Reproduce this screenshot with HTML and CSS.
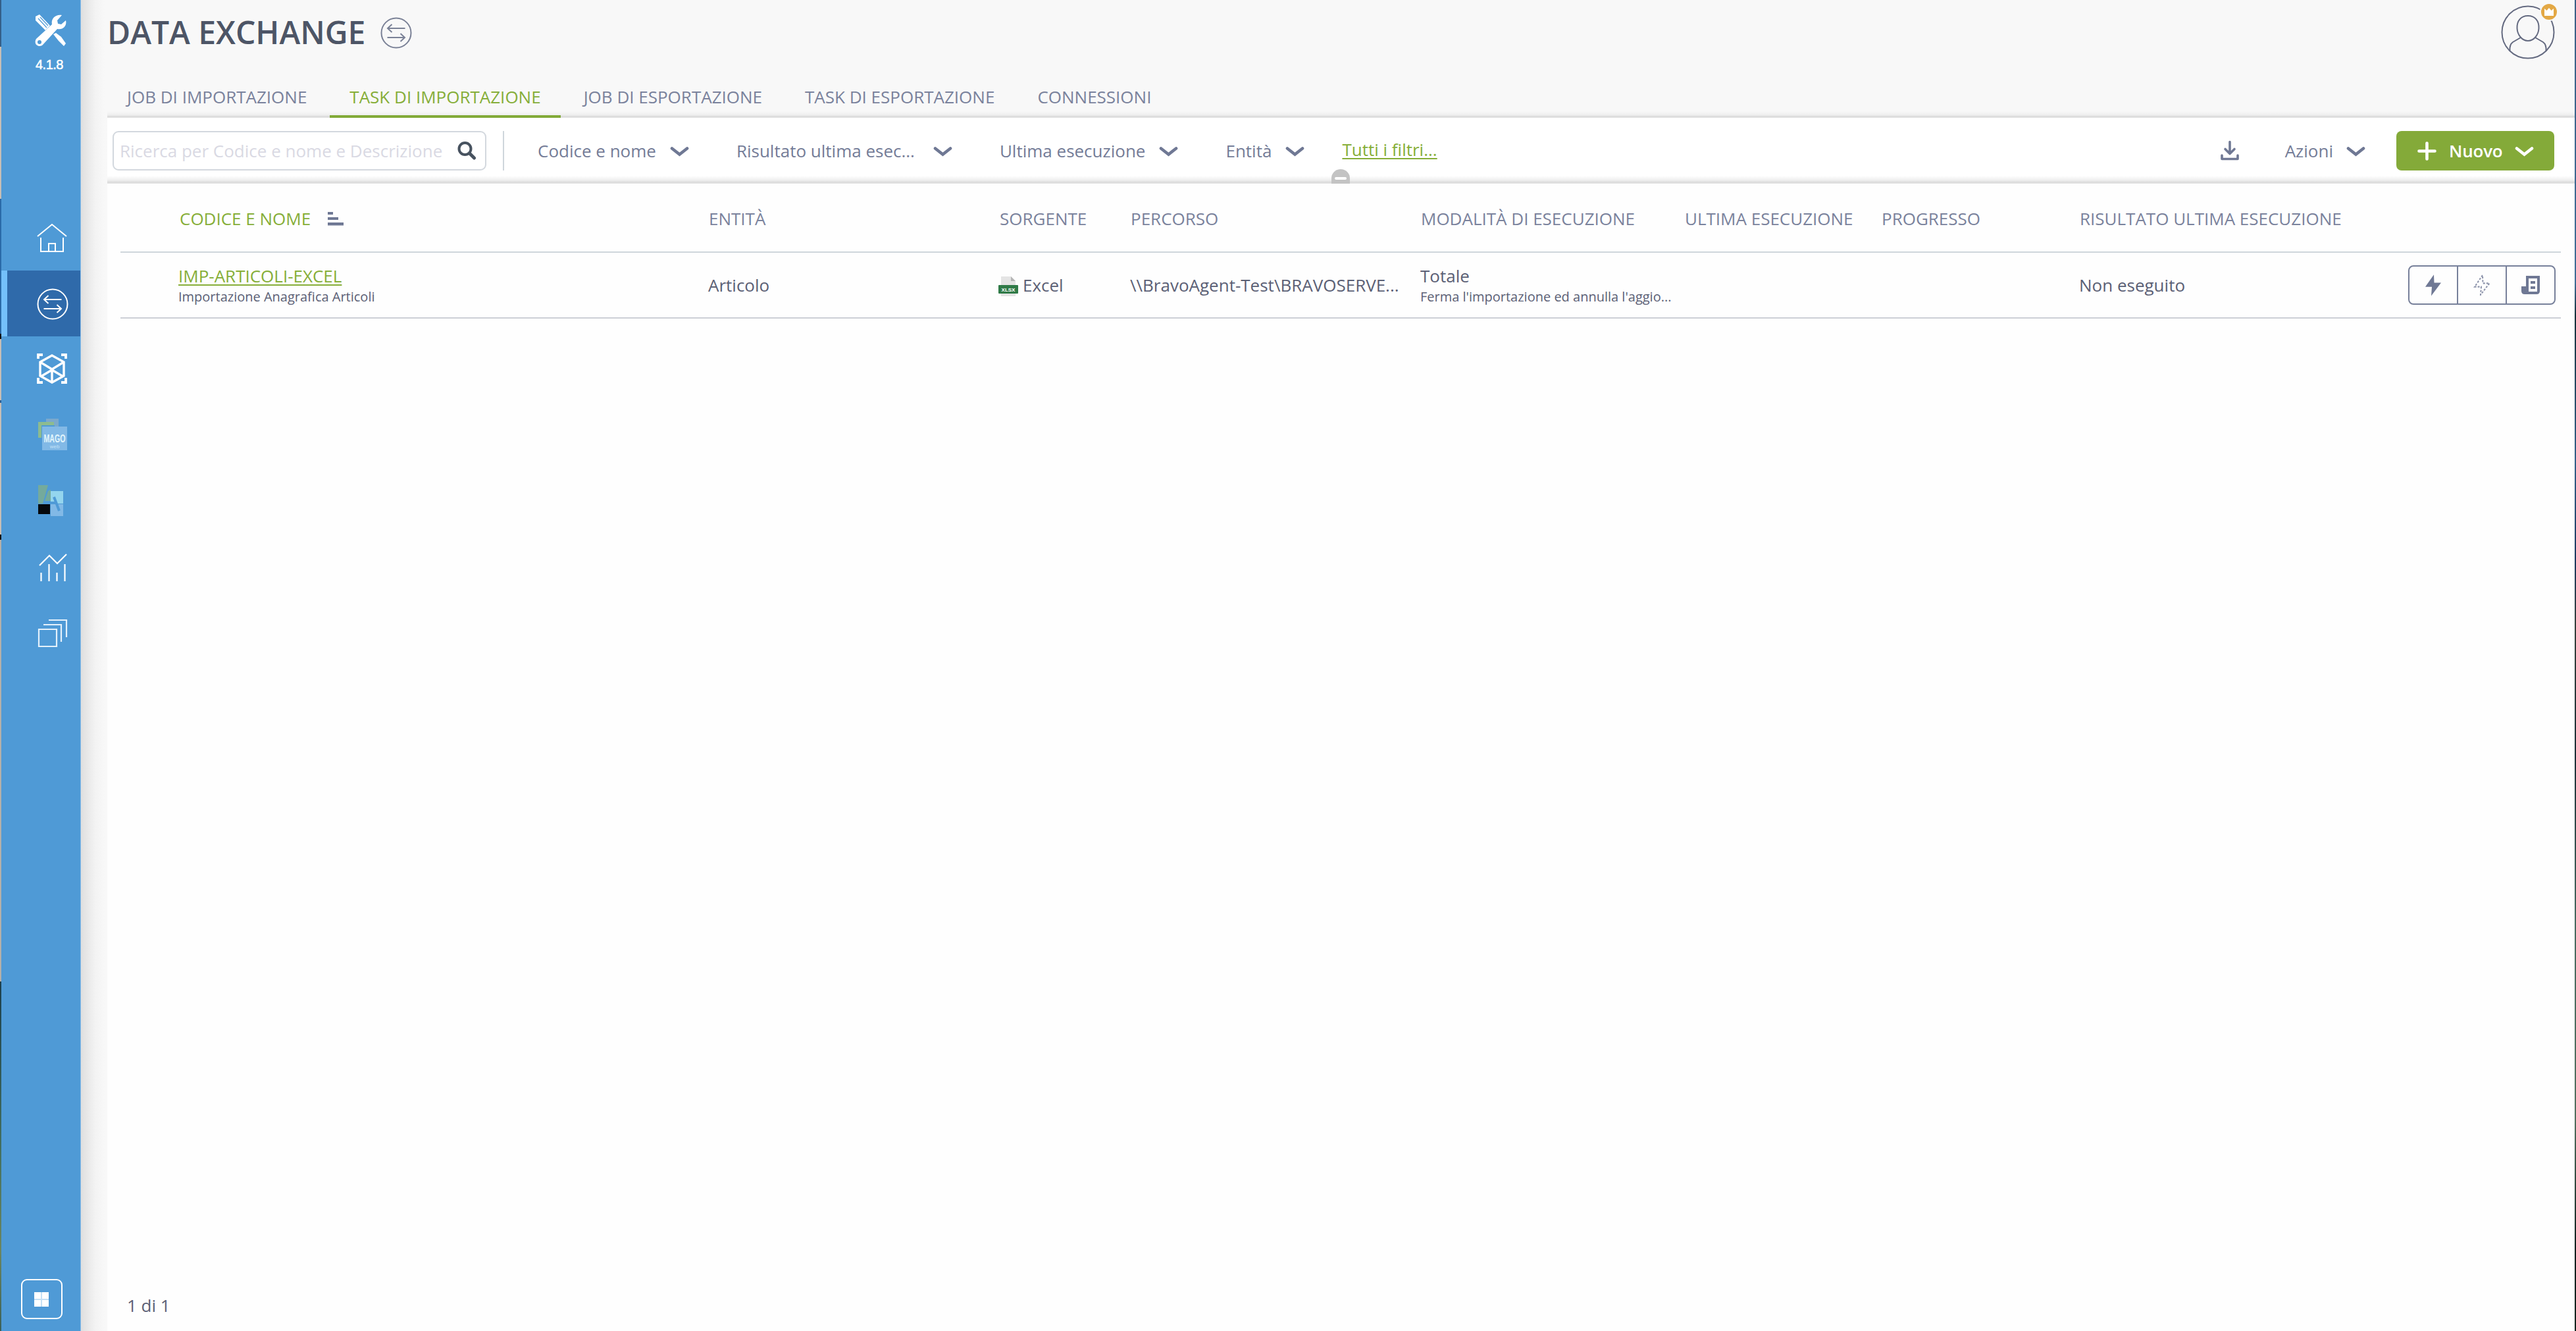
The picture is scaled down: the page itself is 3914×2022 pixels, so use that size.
FILE: index.html
```html
<!DOCTYPE html>
<html lang="it">
<head>
    <meta charset="UTF-8">
    <meta name="viewport" content="width=device-width, initial-scale=1.0">
    <title>Data Exchange</title>
    <link rel="stylesheet" href="styles.css">
</head>
<body>
    <!-- Shared icons -->
    <svg class="sprite">
        <symbol id="chevron" viewBox="0 0 29 16">
            <path d="M3 3.5L14.500 12.500L26 3.500" fill="none" stroke="currentColor" stroke-width="4.600" stroke-linecap="round" stroke-linejoin="miter"/>
        </symbol>
        <symbol id="exchange" viewBox="0 0 48 48">
            <g fill="none" stroke="currentColor">
                <circle cx="24" cy="24" r="22.500"/>
                <path d="M37.500 17H11.500M17.500 11L11 17L17.500 23M10.500 31H36.500M30.500 25L37 31L30.500 37"/>
            </g>
        </symbol>
    </svg>

    <div class="app">
        <div class="edge edge-left"></div>

        <nav class="sidebar">
            <div class="brand">
                <svg width="50" height="50" viewBox="0 0 50 50">
                    <!-- screwdriver -->
                    <path d="M2 4L8 1L24 18L17 25L2 10Z" fill="#fff"/>
                    <path d="M6 7L19 21M9 5L21 18" stroke="#4f9ad6" stroke-width="1.200"/>
                    <path d="M29 31L33 29L41 35L48 45L45 49L37 41Z" fill="#fff"/>
                    <!-- wrench -->
                    <path d="M42 2L35 10L36 15L41 16L48 10C50 18 44 25 35 23L13 47C8 52 -2 47 3 38L27 16C25 7 33 0 42 2Z" fill="#fff"/>
                    <circle cx="8" cy="43" r="3" fill="#4f9ad6"/>
                </svg>
                <span class="version">4.1.8</span>
            </div>
            <ul class="nav-list">
                <li class="nav-item">
                    <svg width="48" height="48" viewBox="0 0 48 48" fill="none" stroke="#fff" stroke-width="2">
                        <path d="M2 22L24 4L46 22M7 24V45H41V24M19 45V33H29V45"/>
                    </svg>
                </li>
                <li class="nav-item active">
                    <svg class="nav-exchange" width="48" height="48"><use href="#exchange"/></svg>
                </li>
                <li class="nav-item">
                    <svg width="48" height="48" viewBox="0 0 48 48" fill="none" stroke="#fff" stroke-width="3.400">
                        <path d="M24 3L42 13V34L24 44L6 34V13ZM6 13L24 24L42 13M24 24V44M24 25L7 35M24 25L41 35"/>
                        <path d="M3 8V2H10M38 2H45V8M3 37V44H10M38 44H45V37" stroke-width="3.800"/>
                    </svg>
                </li>
                <li class="nav-item">
                    <svg width="48" height="50" viewBox="0 0 48 50">
                        <rect x="15" y="0" width="19" height="13" fill="#7ba9cc"/>
                        <rect x="3" y="5" width="24" height="24" fill="#8dbb8f"/>
                        <rect x="8" y="10" width="20" height="19" fill="#4f9ad6"/>
                        <rect x="9" y="12" width="38" height="36" fill="#82b9e6"/>
                        <text class="mago" x="28" y="36" textLength="33" lengthAdjust="spacingAndGlyphs">MAGO</text>
                        <text class="mago-sub" x="28" y="45">web</text>
                    </svg>
                </li>
                <li class="nav-item">
                    <svg width="48" height="48" viewBox="0 0 48 48">
                        <path d="M3 0H18L10 28H3Z" fill="#74aa9c"/>
                        <path d="M18 9L22 7V24H13Z" fill="#74aa9c"/>
                        <rect x="3" y="29" width="18" height="15" fill="#05080c"/>
                        <rect x="22" y="9" width="19" height="19" fill="#94d5ee"/>
                        <rect x="22" y="29" width="19" height="18" fill="#82b9e6"/>
                        <path d="M27 18L35 39M19 27H30" stroke="#4f9ad6" stroke-width="4" fill="none"/>
                    </svg>
                </li>
                <li class="nav-item chart">
                    <svg width="48" height="48" viewBox="0 0 48 48" fill="none" stroke="#fff" stroke-width="2.200">
                        <path d="M5 20L20 5L32 17L46 3M7.500 31V44M19.500 18V44M31.500 31V44M43.500 18V44"/>
                    </svg>
                </li>
                <li class="nav-item">
                    <svg width="48" height="48" viewBox="0 0 48 48" fill="none" stroke="#e4f1fb" stroke-width="2.200">
                        <path d="M4 19H31V45H4ZM11 12H38V38M19 5H46V31"/>
                    </svg>
                </li>
            </ul>
            <div class="menu-toggle">
                <svg width="22" height="22" viewBox="0 0 22 22">
                    <rect width="22" height="22" fill="#c5e0f5"/>
                    <path d="M0 0H10V10H0ZM12 0H22V10H12ZM0 12H10V22H0ZM12 12H22V22H12Z" fill="#fff"/>
                </svg>
            </div>
        </nav>

        <div class="gutter"></div>

        <main class="main">
            <header class="header">
                <div class="title-row">
                    <h1>DATA EXCHANGE</h1>
                    <svg class="title-icon" width="48" height="48"><use href="#exchange"/></svg>
                    <div class="avatar">
                        <svg width="82" height="82" viewBox="0 0 82 82" fill="none" stroke="#646a80" stroke-width="2">
                            <circle cx="41" cy="41" r="39.500"/>
                            <path d="M41 16C52 16 58 24 57.500 35C57 45 50 54 41 54C32 54 25 45 24.500 35C24 24 30 16 41 16Z"/>
                            <path d="M30 49L18 56C14.500 58.500 13 62 13.500 69M52 49L64 56C67.500 58.500 69 62 68.500 69"/>
                        </svg>
                        <span class="badge">
                            <svg width="16" height="12" viewBox="0 0 16 12"><path d="M1 1L4.500 4L8 0L11.500 4L15 1V12H1Z" fill="#fff"/></svg>
                        </span>
                    </div>
                </div>
                <div class="tabs">
                    <a class="tab">JOB DI IMPORTAZIONE</a>
                    <a class="tab active">TASK DI IMPORTAZIONE</a>
                    <a class="tab">JOB DI ESPORTAZIONE</a>
                    <a class="tab">TASK DI ESPORTAZIONE</a>
                    <a class="tab">CONNESSIONI</a>
                </div>
            </header>

            <section class="toolbar">
                <div class="search">
                    <span>Ricerca per Codice e nome e Descrizione</span>
                    <svg width="30" height="30" viewBox="0 0 30 30" fill="none" stroke="#47525f" stroke-linecap="round">
                        <circle cx="12.500" cy="12" r="9" stroke-width="4"/>
                        <path d="M20 19.500L26.500 26" stroke-width="5"/>
                    </svg>
                </div>
                <div class="divider"></div>
                <div class="filters">
                    <div class="filter"><span>Codice e nome</span><svg class="chevron"><use href="#chevron"/></svg></div>
                    <div class="filter"><span class="wide">Risultato ultima esec...</span><svg class="chevron"><use href="#chevron"/></svg></div>
                    <div class="filter"><span>Ultima esecuzione</span><svg class="chevron"><use href="#chevron"/></svg></div>
                    <div class="filter"><span>Entità</span><svg class="chevron"><use href="#chevron"/></svg></div>
                </div>
                <a class="all-filters">Tutti i filtri...</a>
                <div class="tools">
                    <svg class="download" width="30" height="32" viewBox="0 0 30 32" fill="none" stroke="#6f7894" stroke-width="3.600" stroke-linecap="round" stroke-linejoin="round">
                        <path d="M15 2.500V20M8 13.500L15 20.500L22 13.500M3 23V28.500H27V23"/>
                    </svg>
                    <div class="filter"><span>Azioni</span><svg class="chevron"><use href="#chevron"/></svg></div>
                    <button class="btn-new">
                        <svg class="plus" width="29" height="29" viewBox="0 0 29 29"><path d="M14.500 2.500V26.500M2.500 14.500H26.500" stroke="#fff" stroke-width="4.600" stroke-linecap="round"/></svg>
                        <span>Nuovo</span>
                        <svg class="chevron"><use href="#chevron"/></svg>
                    </button>
                </div>
                <div class="handle"><span></span></div>
            </section>

            <section class="content">
                <div class="table">
                    <div class="row head">
                        <div></div>
                        <div class="sorted">
                            CODICE E NOME
                            <svg width="24" height="21" viewBox="0 0 24 21" fill="#6f7894"><path d="M0 0H8V4H0ZM0 8H16V12H0ZM0 16H24V20.500H0Z"/></svg>
                        </div>
                        <div>ENTITÀ</div>
                        <div>SORGENTE</div>
                        <div>PERCORSO</div>
                        <div>MODALITÀ DI ESECUZIONE</div>
                        <div>ULTIMA ESECUZIONE</div>
                        <div>PROGRESSO</div>
                        <div>RISULTATO ULTIMA ESECUZIONE</div>
                        <div></div>
                    </div>
                    <div class="row">
                        <div></div>
                        <div class="name">
                            <a class="task-link">IMP-ARTICOLI-EXCEL</a>
                            <small>Importazione Anagrafica Articoli</small>
                        </div>
                        <div>Articolo</div>
                        <div class="source">
                            <svg width="30" height="32" viewBox="0 0 30 32">
                                <path d="M4 1H19L26 8V31H4Z" fill="#e4e4e4"/>
                                <path d="M19 1L26 8H19Z" fill="#b5b5b5"/>
                                <rect x="0" y="14" width="30" height="13" rx="1" fill="#2f7a47"/>
                                <text class="xlsx" x="15" y="23.500">XLSX</text>
                            </svg>
                            Excel
                        </div>
                        <div>\\BravoAgent-Test\BRAVOSERVE...</div>
                        <div class="stack">
                            <span>Totale</span>
                            <small>Ferma l'importazione ed annulla l'aggio...</small>
                        </div>
                        <div></div>
                        <div></div>
                        <div>Non eseguito</div>
                        <div class="actions">
                            <span class="action">
                                <svg width="26" height="34" viewBox="0 0 26 30" preserveAspectRatio="none"><path d="M14 1L1 17.500H11L10 29.500L25 12H14.500Z" fill="#6f7894"/></svg>
                            </span>
                            <span class="action">
                                <svg width="26" height="32" viewBox="0 0 26 30" preserveAspectRatio="none"><path d="M14 1L2 17.500H12L11 29L24.500 12.500H14.500Z" fill="none" stroke="#8d94ab" stroke-width="2" stroke-dasharray="3 2"/></svg>
                            </span>
                            <span class="action">
                                <svg width="30" height="30" viewBox="0 0 30 30">
                                    <path d="M8 1H29V24Q29 29 24 29H6Q1 29 1 24V17H8Z" fill="#6f7894"/>
                                    <path d="M12 5H25V25H12Z" fill="#fff"/>
                                    <path d="M15 9H22V13H15ZM15 17H22V21H15Z" fill="#6f7894"/>
                                </svg>
                            </span>
                        </div>
                    </div>
                </div>
                <div class="pager">1 di 1</div>
            </section>
        </main>

        <div class="edge edge-right"></div>
    </div>
</body>
</html>
```
FILE: styles.css
```css
* {
    box-sizing: border-box;
}
body {
    margin: 0;
    font-family: "Open Sans", "Noto Sans", sans-serif;
    font-size: 26px;
    line-height: 36px;
    color: #5b6075;
    background-color: #fefefe;
}
.sprite {
    display: none;
}
.app {
    display: grid;
    grid-template-columns: 2px 121px 40px 1fr 2px;
    height: 100vh;
}

/* strips of the desktop behind the window */
.edge-left {
    background: linear-gradient(#345f88 0 71px, #c6beb6 71px 302px, #2a6aa8 302px 507px, #111 507px 515px, #c6beb6 515px 608px, #2a5f96 608px 612px, #c6beb6 612px 812px, #111 812px 820px, #b5b0aa 820px 1491px, #1c3f4c 1491px, #44705f 1750px, #6b8560 1900px, #3b6058 2022px);
}
.edge-right {
    background: linear-gradient(#3a5f85, #3f6d96 430px, #15303a 480px, #34618a 700px, #1d3a60 850px, #37413c 950px, #1d3038 1150px, #476a60 1400px, #53705f 1700px, #10201f 1900px, #17251f 2022px);
}

/* sidebar */
.sidebar {
    display: flex;
    flex-direction: column;
    background-color: #4f9ad6;
    border-right: 1px solid #8abce8;
}
.brand {
    display: flex;
    flex-direction: column;
    align-items: center;
    height: 311px;
    padding: 21px 0 0 32px;
    margin-right: 2px;
}
.version {
    margin-top: 15px;
    margin-right: 4px;
    font-family: "Liberation Sans", Arial, sans-serif;
    font-size: 20px;
    line-height: 24px;
    letter-spacing: -0.5px;
    color: #fff;
    -webkit-text-stroke: 0.5px #fff;
}
.nav-list {
    list-style: none;
    margin: 0;
    padding: 0;
    flex: 1;
}
.nav-item {
    display: flex;
    align-items: center;
    height: 100px;
    padding-left: 53px;
}
.nav-item.active {
    background-color: #2f6aaa;
    border-left: 9px solid #74c0fa;
    padding: 2px 0 0 45px;
}
.nav-item.chart {
    padding-top: 3px;
}
.nav-exchange {
    color: #fff;
    stroke-width: 2px;
}
.mago {
    font: 700 17px "Liberation Sans", Arial, sans-serif;
    text-anchor: middle;
    fill: #e2f5fb;
}
.mago-sub {
    font: 8px "Liberation Sans", Arial, sans-serif;
    text-anchor: middle;
    fill: #c3e2f6;
}
.menu-toggle {
    display: flex;
    align-items: center;
    justify-content: center;
    width: 63px;
    height: 61px;
    margin: 0 0 18px 30px;
    padding-right: 2px;
    border: 2px solid #fff;
    border-radius: 9px;
}
.gutter {
    background: linear-gradient(to right, #dfdfdf, #e8e8e8 10px, #f3f3f3 22px, #f8f8f8 36px);
}

/* header */
.main {
    display: flex;
    flex-direction: column;
    min-width: 0;
}
.header {
    height: 179px;
    background: linear-gradient(#f8f8f8 169px, #eee 175px, #d9d9d9 177px, #e6e6e6 179px);
}
.title-row {
    display: flex;
    align-items: center;
    height: 98px;
    margin-bottom: 17px;
}
h1 {
    margin: 0;
    font-size: 48px;
    font-weight: 600;
    line-height: 64px;
    color: #4d5566;
}
.title-icon {
    margin: 1px 0 0 23px;
    color: #7a8196;
    stroke-width: 2px;
}
.avatar {
    position: relative;
    width: 82px;
    height: 82px;
    margin: 0 30px 0 auto;
}
.badge {
    position: absolute;
    top: -4px;
    right: -5px;
    display: flex;
    align-items: center;
    justify-content: center;
    width: 28px;
    height: 28px;
    border: 2px solid #f8f8f8;
    border-radius: 50%;
    background-color: #e3a845;
}
.tabs {
    display: flex;
    gap: 5px;
    height: 64px;
}
.tab {
    padding: 0 30px;
    line-height: 64px;
    color: #7a829c;
}
.tab.active {
    color: #86ae38;
    box-shadow: inset 0 -4px #82aa38;
}

/* toolbar */
.toolbar {
    position: relative;
    display: flex;
    align-items: center;
    height: 100px;
    padding: 0 31px 0 8px;
    color: #747c97;
    background: linear-gradient(#fff 88px, #eee 95px, #dadada 98px, #e6e6e6 100px);
}
.search {
    display: flex;
    align-items: center;
    justify-content: space-between;
    width: 568px;
    height: 60px;
    padding: 0 13px 0 9px;
    border: 2px solid #d3d8de;
    border-radius: 9px;
    background-color: #fff;
    color: #d9d9e3;
}
.divider {
    width: 2px;
    height: 60px;
    margin-left: 25px;
    background-color: #cfd6dc;
}
.filters {
    display: flex;
    gap: 72px;
    margin-left: 51px;
}
.filter {
    display: flex;
    align-items: center;
    gap: 21px;
    white-space: nowrap;
}
.wide {
    width: 278px;
}
.chevron {
    width: 29px;
    height: 16px;
    margin-top: 2px;
}
.filter .chevron {
    color: #6f7894;
}
.all-filters {
    margin: -4px 0 0 57px;
    color: #86ae38;
    text-decoration: underline;
    text-decoration-thickness: 2px;
    text-underline-offset: 3px;
}
.tools {
    display: flex;
    align-items: center;
    margin-left: auto;
}
.download {
    margin-right: 69px;
}
.tools .filter {
    gap: 20px;
}
.btn-new {
    display: flex;
    align-items: center;
    width: 240px;
    height: 60px;
    margin-left: 47px;
    padding: 0 0 0 32px;
    border: 0;
    border-radius: 8px;
    background-color: #84aa39;
    color: #fff;
    font: 600 26px/36px "Open Sans", "Noto Sans", sans-serif;
}
.btn-new span {
    margin: 0 18px 0 19px;
    letter-spacing: -0.2px;
}
.handle {
    position: absolute;
    left: 1860px;
    bottom: 0;
    width: 28px;
    height: 22px;
    padding: 12px 5px 0;
    border-radius: 14px 14px 0 0;
    background-color: #c3c3c3;
}
.handle span {
    display: block;
    height: 4px;
    border-radius: 2px;
    background-color: #fff;
}

/* table */
.content {
    display: flex;
    flex-direction: column;
    flex: 1;
    padding: 0 21px 0 20px;
}
.table {
    flex: 1;
}
.row {
    display: grid;
    grid-template-columns: 88px 805px 442px 199px 441px 401px 299px 301px 500px 1fr;
    align-items: center;
    height: 100px;
    border-bottom: 2px solid #cccfd6;
    white-space: nowrap;
}
.row.head {
    height: 105px;
    padding: 3px 0 0 1px;
    border-bottom-color: #ced6db;
    color: #7a829c;
}
.sorted {
    display: flex;
    align-items: center;
    gap: 26px;
    padding-left: 1px;
    color: #86ae38;
}
.name, .stack {
    display: flex;
    flex-direction: column;
    align-items: flex-start;
    line-height: 34px;
}
small {
    margin-top: 2px;
    font-size: 20px;
    line-height: 26px;
}
.task-link {
    color: #86ae38;
    text-decoration: underline;
    text-decoration-thickness: 2px;
    text-underline-offset: 3px;
}
.source {
    display: flex;
    align-items: center;
    gap: 7px;
    margin-left: -1px;
}
.source svg {
    margin-top: 4px;
}
.xlsx {
    font: 700 8px "Liberation Sans", Arial, sans-serif;
    text-anchor: middle;
    fill: #fff;
}
.actions {
    display: flex;
    justify-self: end;
    width: 224px;
    height: 60px;
    margin-right: 8px;
    border: 2px solid #77809a;
    border-radius: 8px;
}
.action {
    display: flex;
    flex: 1;
    align-items: center;
    justify-content: center;
}
.action + .action {
    border-left: 2px solid #77809a;
}
.pager {
    height: 57px;
    padding-left: 10px;
}
```
